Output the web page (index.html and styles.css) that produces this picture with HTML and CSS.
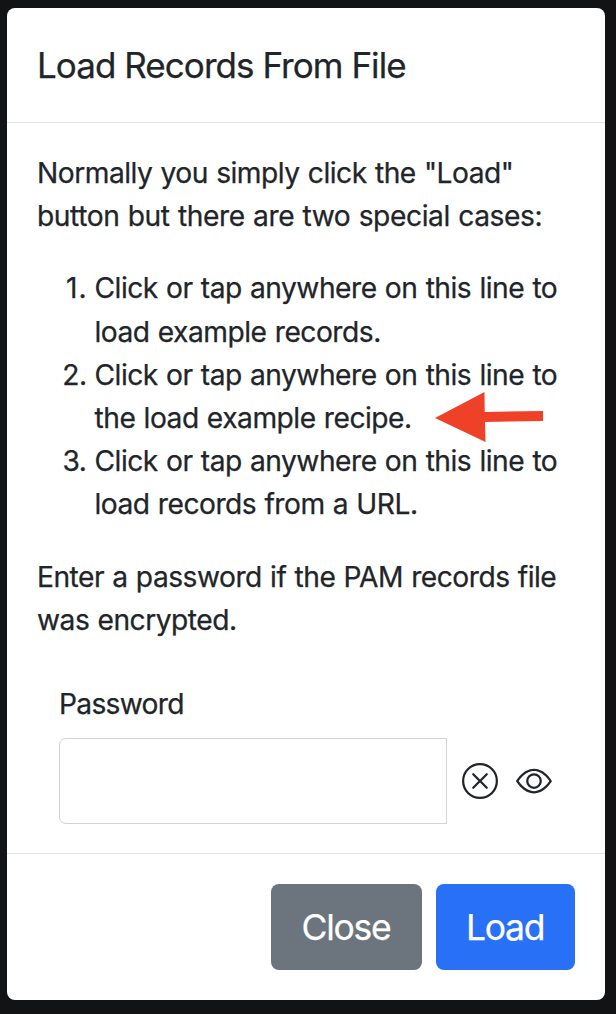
FILE: index.html
```html
<!DOCTYPE html>
<html lang="en">
<head>
<meta charset="utf-8">
<title>Load Records From File</title>
<link rel="stylesheet" href="styles.css">
</head>
<body>
<section class="modal">
  <header class="modal-header"><h1 class="title">Load Records From File</h1></header>
  <div class="modal-body">
    <p class="text intro">Normally you simply click the "Load"<br><span class="wide">button but there are two special cases:</span></p>
    <ol class="cases">
      <li><span class="num one">1.</span><span>Click or tap anywhere on this line to<br>load example records.</span></li>
      <li><span class="num">2.</span><span>Click or tap anywhere on this line to<br>the load example recipe.</span></li>
      <li><span class="num">3.</span><span>Click or tap anywhere on this line to<br>load records from a URL.</span></li>
    </ol>
    <p class="text">Enter a password if the PAM records file<br>was encrypted.</p>
    <div class="field">
      <label class="label" for="pw">Password</label>
      <div class="row">
        <input class="input" id="pw" type="password">
        <svg class="icon clear" viewBox="0 0 16 16"><path d="M8 15A7 7 0 1 1 8 1a7 7 0 0 1 0 14m0 1A8 8 0 1 0 8 0a8 8 0 0 0 0 16"/><path d="M4.646 4.646a.5.5 0 0 1 .708 0L8 7.293l2.646-2.647a.5.5 0 0 1 .708.708L8.707 8l2.647 2.646a.5.5 0 0 1-.708.708L8 8.707l-2.646 2.647a.5.5 0 0 1-.708-.708L7.293 8 4.646 5.354a.5.5 0 0 1 0-.708"/></svg>
        <svg class="icon" viewBox="0 0 16 16"><path d="M16 8s-3-5.500-8-5.500S0 8 0 8s3 5.500 8 5.500S16 8 16 8M1.173 8a13 13 0 0 1 1.660-2.043C4.120 4.668 5.880 3.500 8 3.500s3.879 1.168 5.168 2.457A13 13 0 0 1 14.828 8q-.086.130-.195.288c-.335.480-.830 1.120-1.465 1.755C11.879 11.332 10.119 12.500 8 12.500s-3.879-1.168-5.168-2.457A13 13 0 0 1 1.172 8z"/><path d="M8 5.500a2.500 2.500 0 1 0 0 5 2.500 2.500 0 0 0 0-5M4.500 8a3.500 3.500 0 1 1 7 0 3.500 3.500 0 0 1-7 0"/></svg>
      </div>
    </div>
  </div>
  <footer class="modal-footer">
    <button class="btn close">Close</button>
    <button class="btn load">Load</button>
  </footer>
  <svg class="arrow" viewBox="0 0 110 50"><path d="M0 26 49.500 0 49.700 20 108 19 108 29 50 30 50.500 50Z"/></svg>
</section>
</body>
</html>
```

FILE: styles.css
```css
* { box-sizing: border-box; }
body { margin: 0; height: 1014px; padding: 8px 11px 14px 7px; background: #121315; color: #212529; font-family: Inter, sans-serif; overflow: hidden; }
.modal { position: relative; width: 598px; height: 992px; background: #fff; border-radius: 8px; display: flex; flex-direction: column; -webkit-text-stroke: 0.25px currentColor; }
.modal-header { height: 115px; padding: 30px; border-bottom: 1px solid #dee2e6; }
.title { margin: 0; font-size: 35px; font-weight: 400; line-height: 54px; letter-spacing: -0.95px; white-space: nowrap; }
.modal-body { height: 731px; padding: 29px 30px 28px; border-bottom: 1px solid #dee2e6; }
.text, .cases { margin: 0 0 29px; font-size: 28.2px; line-height: 43.2px; white-space: nowrap; letter-spacing: -0.5px; word-spacing: 0.8px; }
.wide { letter-spacing: -0.42px; }
.cases { list-style: none; padding: 0; }
.cases li { display: flex; }
.num { width: 57.5px; padding-right: 8px; text-align: right; }
.one { letter-spacing: 0.9px; padding-right: 7px; }
.field { padding: 12px 22px 0; }
.label { display: block; font-size: 28.2px; line-height: 43px; letter-spacing: -0.72px; }
.row { display: flex; align-items: center; margin-top: 12px; }
.input { width: 388px; height: 86px; border: 1px solid #ced4da; border-radius: 7px 0 0 7px; background: #fff; }
.icon { width: 36px; height: 36px; fill: #212529; }
.clear { margin: 0 18px 0 15px; }
.modal-footer { height: 146px; display: flex; justify-content: flex-end; gap: 14px; padding: 30px 30px; }
.btn { height: 86px; padding: 2px 1px 0 0; border: 0; border-radius: 8px; color: #fff; font: 35.5px/84px Inter, sans-serif; letter-spacing: -1.3px; }
.close { width: 151px; background: #6c757d; }
.load { width: 139px; background: #2871f6; }
.arrow { position: absolute; left: 428px; top: 384px; width: 110px; height: 50px; fill: #ee4127; }
```
